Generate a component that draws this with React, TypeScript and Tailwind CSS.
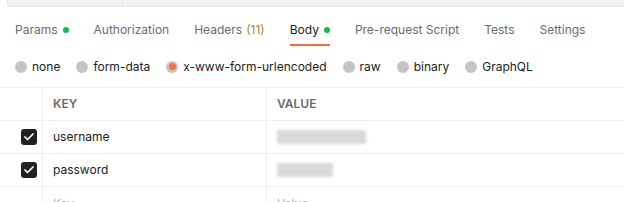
import { Check } from 'lucide-react';

const tabs = [
  { label: 'Params', dot: true },
  { label: 'Authorization' },
  { label: 'Headers', count: '(11)' },
  { label: 'Body', dot: true, active: true },
  { label: 'Pre-request Script' },
  { label: 'Tests' },
  { label: 'Settings' },
];

const bodyTypes = ['none', 'form-data', 'x-www-form-urlencoded', 'raw', 'binary', 'GraphQL'];

const rows = [
  { key: 'username', blur: 'w-[89px]' },
  { key: 'password', blur: 'w-[56px]' },
];

export default function App() {
  return (
    <div className="w-[624px] h-[202px] overflow-hidden bg-white font-['Inter',sans-serif] text-[12px]">
      {/* url bar remnant */}
      <div className="ml-[7px] h-[7px] flex bg-[#f2f2f2] border-b border-l border-[#e6e6e6] rounded-bl-[4px]">
        <div className="w-[115px] border-r border-[#e6e6e6]" />
      </div>

      {/* tabs */}
      <div className="flex gap-[25px] pl-[15px] h-[39px]">
        {tabs.map((t) => (
          <div
            key={t.label}
            className={`flex items-center h-full pt-[9px] border-b-2 ${
              t.active ? 'border-[#f26b3a] text-[#212121]' : 'border-transparent text-[#6b6b6b]'
            }`}
          >
            <span>{t.label}</span>
            {t.count && <span className="ml-[4px] text-[#a88a26]">{t.count}</span>}
            {t.dot && <span className="ml-[5px] w-[6px] h-[6px] rounded-full bg-[#0cbb52]" />}
          </div>
        ))}
      </div>

      {/* body type radios */}
      <div className="flex items-center gap-[16px] pl-[15px] h-[41px] text-[#212121]">
        {bodyTypes.map((b) => (
          <label key={b} className="flex items-center gap-[5px]">
            <span className="w-[12px] h-[12px] rounded-full bg-[#c4c4c4] flex items-center justify-center">
              {b === 'x-www-form-urlencoded' && <span className="w-[7px] h-[7px] rounded-full bg-[#ff6c37]" />}
            </span>
            <span>{b}</span>
          </label>
        ))}
      </div>

      {/* table */}
      <div className="border-t border-[#ededed]">
        <div className="grid grid-cols-[43px_224px_1fr] h-[33px] border-b border-[#ededed] text-[12px] font-semibold text-[#6b6b6b]">
          <div className="border-r border-[#ededed]" />
          <div className="flex items-center px-[10px] border-r border-[#ededed]">KEY</div>
          <div className="flex items-center px-[10px]">VALUE</div>
        </div>
        {rows.map((r) => (
          <div key={r.key} className="grid grid-cols-[43px_224px_1fr] h-[33px] border-b border-[#ededed] text-[#212121]">
            <div className="flex items-center justify-end pr-[5px] border-r border-[#ededed]">
              <span className="w-[16px] h-[16px] rounded-[3px] bg-[#212121] flex items-center justify-center">
                <Check className="w-[12px] h-[12px] text-white" strokeWidth={3.5} />
              </span>
            </div>
            <div className="flex items-center px-[10px] border-r border-[#ededed]">{r.key}</div>
            <div className="flex items-center px-[10px]">
              <span className={`${r.blur} h-[14px] bg-[#d9d9d9] blur-[1.5px]`} />
            </div>
          </div>
        ))}
        <div className="grid grid-cols-[43px_224px_1fr] h-[33px] text-[#b3b3b3]">
          <div className="border-r border-[#ededed]" />
          <div className="flex items-center px-[10px] border-r border-[#ededed]">Key</div>
          <div className="flex items-center px-[10px]">Value</div>
        </div>
      </div>
    </div>
  );
}
